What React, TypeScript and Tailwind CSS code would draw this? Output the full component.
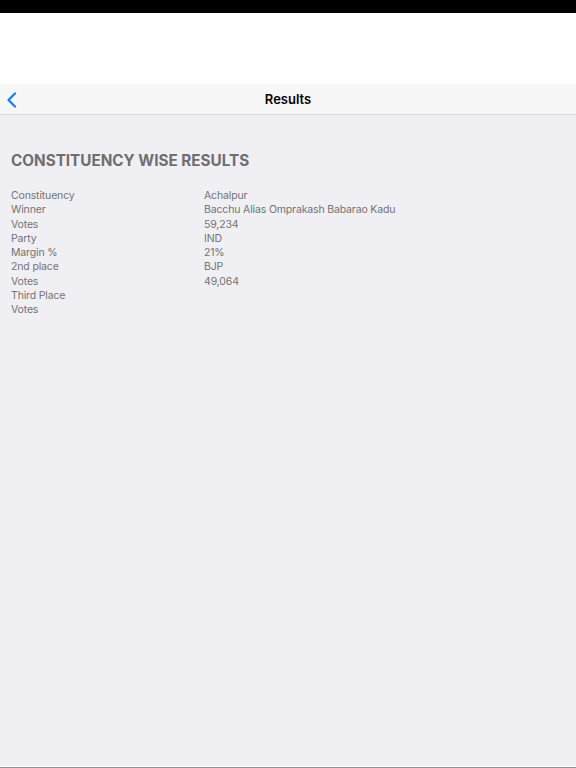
import React from 'react';

const rows: [string, string][] = [
    ['Constituency', 'Achalpur'],
    ['Winner', 'Bacchu Alias Omprakash Babarao Kadu'],
    ['Votes', '59,234'],
    ['Party', 'IND'],
    ['Margin %', '21%'],
    ['2nd place', 'BJP'],
    ['Votes', '49,064'],
    ['Third Place', ''],
    ['Votes', ''],
];

export default function App() {
    return (
        <div className="flex h-[768px] w-[576px] flex-col overflow-hidden bg-[#efeff4] font-['Inter',sans-serif]">
            {/* status bar */}
            <div className="h-[13px] bg-black" />
            <div className="h-[71px] bg-white" />

            {/* navigation bar */}
            <div className="relative flex h-[31px] items-center justify-center border-b border-[#d8d8dc] bg-[#f7f7f7] pt-[2px]">
                <button className="absolute left-[6px] top-[8px] text-[#1a7cf0]">
                    <svg width="11" height="16" viewBox="0 0 11 16" fill="none">
                        <path d="M9 1.5 L2.5 8 L9 14.5" stroke="currentColor" strokeWidth="2.2" strokeLinecap="round" strokeLinejoin="round" />
                    </svg>
                </button>
                <span className="text-[13px] font-semibold text-black">Results</span>
            </div>

            {/* content */}
            <div className="flex-1 px-[11px] pt-[37px]">
                <h1 className="text-[15.25px] font-bold leading-[18px] text-[#6d6d72]">
                    CONSTITUENCY WISE RESULTS
                </h1>
                <div className="mt-[19px] flex flex-col text-[10.5px] leading-[14.25px] tracking-[-0.15px] text-[#737377]">
                    {rows.map(([label, value], i) => (
                        <div key={i} className="flex">
                            <span className="w-[193px] shrink-0">{label}</span>
                            <span>{value}</span>
                        </div>
                    ))}
                </div>
            </div>

            {/* bottom edge */}
            <div className="h-px bg-white" />
            <div className="h-px bg-[#8e8e93]" />
        </div>
    );
}
